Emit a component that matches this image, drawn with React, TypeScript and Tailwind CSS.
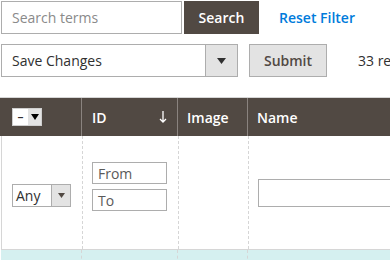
const Triangle = ({ color = "#303030" }: { color?: string }) => (
  <svg width="9" height="6" viewBox="0 0 9 6">
    <path d="M0 0 L9 0 L4.5 6 Z" fill={color} />
  </svg>
);

const App = () => {
  return (
    <div
      className="w-[390px] h-[260px] overflow-hidden bg-white text-[14px] text-[#303030]"
      style={{ fontFamily: '"Open Sans", "Liberation Sans", sans-serif' }}
    >
      {/* search bar */}
      <div className="flex items-center pl-px pt-px">
        <div className="shrink-0 w-[181px] h-[33px] border border-[#adadad] flex items-center pl-[10px] text-[#8a8a8a]">
          Search terms
        </div>
        <button className="shrink-0 ml-[2px] w-[75px] h-[33px] bg-[#514943] text-white font-semibold text-[14px] flex items-center justify-center">
          Search
        </button>
        <span className="shrink-0 ml-[20px] text-[#007bdb] font-semibold whitespace-nowrap">Reset Filter</span>
      </div>

      {/* mass actions */}
      <div className="flex items-center pl-px mt-[10px]">
        <div className="shrink-0 w-[237px] h-[33px] border border-[#adadad] flex">
          <div className="flex-1 flex items-center pl-[10px]">Save Changes</div>
          <div className="w-[32px] border-l border-[#adadad] bg-[#e3e3e3] flex items-center justify-center">
            <Triangle />
          </div>
        </div>
        <button className="shrink-0 ml-[11px] w-[78px] h-[33px] bg-[#e3e3e3] border border-[#adadad] text-[#514943] font-semibold flex items-center justify-center">
          Submit
        </button>
        <span className="shrink-0 ml-[31px] whitespace-nowrap">33 records found</span>
      </div>

      {/* grid */}
      <div className="mt-[20px] border-t border-[#d6d6d6]">
        <div className="flex h-[38px] bg-[#514943] text-white font-semibold">
          <div className="shrink-0 w-[82px] border-r border-[#8a837f] flex items-center pl-[12px]">
            <div className="flex h-[18px] border border-[#cfcfcf]">
              <div className="w-[15px] bg-white flex items-center justify-center text-[#303030] text-[12px] leading-none">
                –
              </div>
              <div className="w-[13px] bg-[#e3e3e3] flex items-center justify-center">
                <svg width="8" height="6" viewBox="0 0 8 6">
                  <path d="M0 0 L8 0 L4 6 Z" fill="#000" />
                </svg>
              </div>
            </div>
          </div>
          <div className="shrink-0 w-[96px] border-r border-[#8a837f] flex items-center justify-between pl-[10px] pr-[10px]">
            <span>ID</span>
            <svg width="8" height="12" viewBox="0 0 8 12">
              <path d="M4 0 V11 M1 8 L4 11 L7 8" stroke="#fff" strokeWidth="1.3" fill="none" />
            </svg>
          </div>
          <div className="shrink-0 w-[70px] border-r border-[#8a837f] flex items-center pl-[9px]">Image</div>
          <div className="flex-1 flex items-center pl-[9px]">Name</div>
        </div>

        <div className="flex h-[114px] border-l border-[#d6d6d6] border-b border-b-[#d6d6d6] ml-px overflow-hidden">
          <div className="shrink-0 w-[81px] border-r border-dashed border-[#d6d6d6] pl-[10px] pt-[48px]">
            <div className="flex w-[59px] h-[23px] border border-[#adadad]">
              <div className="flex-1 flex items-center pl-[3px]">Any</div>
              <div className="w-[19px] border-l border-[#adadad] bg-[#e3e3e3] flex items-center justify-center">
                <svg width="7" height="5" viewBox="0 0 7 5">
                  <path d="M0 0 L7 0 L3.5 5 Z" fill="#514943" />
                </svg>
              </div>
            </div>
          </div>
          <div className="shrink-0 w-[96px] border-r border-dashed border-[#d6d6d6] pl-[9px] pt-[26px] flex flex-col gap-[5px]">
            <div className="w-[75px] h-[22px] border border-[#adadad] flex items-center pl-[5px] text-[#5a5a5a]">
              From
            </div>
            <div className="w-[75px] h-[22px] border border-[#adadad] flex items-center pl-[5px] text-[#5a5a5a]">
              To
            </div>
          </div>
          <div className="shrink-0 w-[70px] border-r border-dashed border-[#d6d6d6]" />
          <div className="shrink-0 pl-[9px] pt-[43px]">
            <div className="w-[200px] h-[28px] border border-[#adadad]" />
          </div>
        </div>

        <div className="flex h-[20px] bg-[#d5f0f0] ml-px">
          <div className="shrink-0 w-[81px] border-r border-dashed border-[#d6d6d6]" />
          <div className="shrink-0 w-[96px] border-r border-dashed border-[#d6d6d6]" />
          <div className="shrink-0 w-[70px] border-r border-dashed border-[#d6d6d6]" />
        </div>
      </div>
    </div>
  );
};

export default App;
